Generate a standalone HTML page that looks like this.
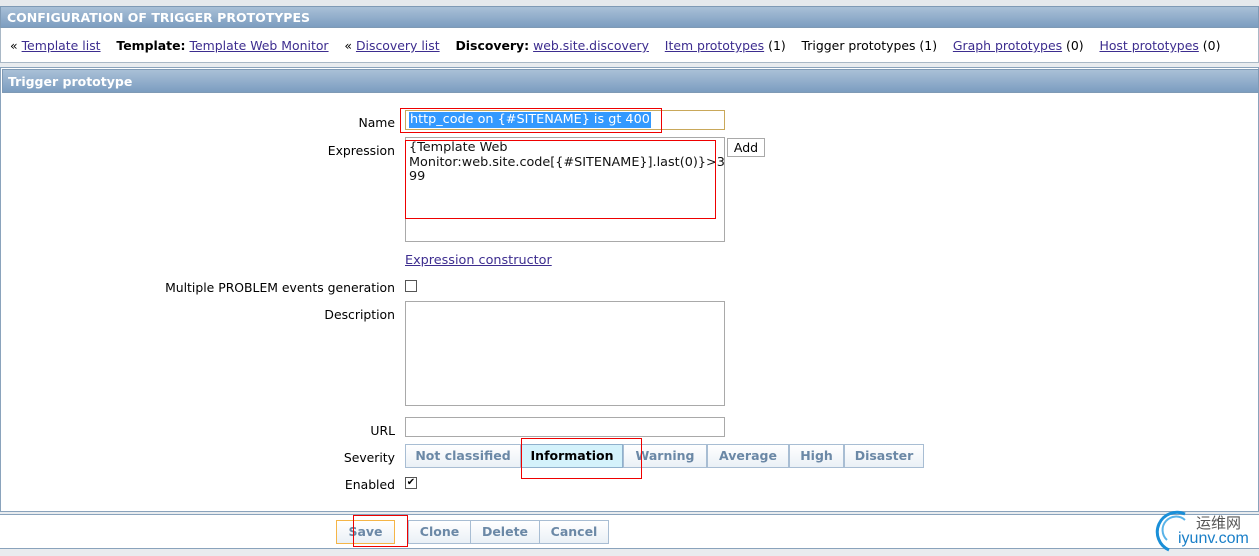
<!DOCTYPE html>
<html><head><style>
*{margin:0;padding:0;box-sizing:border-box}
body{width:1259px;height:556px;background:#e9ecef;font-family:"DejaVu Sans","Liberation Sans",sans-serif;font-size:12.4px;color:#000;position:relative;overflow:hidden}
.a{position:absolute}
a{color:#3d2d8f;text-decoration:underline}
.bar{background:linear-gradient(#a9c0d7,#7c9dc0);color:#fff;font-weight:bold;font-size:12.5px;border:1px solid #7f9ab5}
.lbl{position:absolute;right:864px;text-align:right;white-space:nowrap}
.box{position:absolute;background:#fff;border:1px solid #a9a9a9}
.btn{position:absolute;top:0;height:24px;border:1px solid #a8bdd3;background:linear-gradient(#fff,#eaf0f6);color:#6b88a6;font-weight:bold;text-align:center;line-height:22px;font-size:12.5px}
.red{position:absolute;border:1px solid #e00}
</style></head><body>
<div class="a" style="left:0;top:0;width:1259px;height:6px;background:#e6e9ec"></div>
<div class="a bar" style="left:0;top:6px;width:1259px;height:22px;padding:3px 0 0 6px">CONFIGURATION OF TRIGGER PROTOTYPES</div>
<div class="a" style="left:0;top:28px;width:1259px;height:35px;background:#fff;border:1px solid #a9b8c6;border-top:none"></div>
<div class="a" style="left:10px;top:38px;white-space:nowrap;font-size:12.45px">« <a>Template list</a>&nbsp;&nbsp;&nbsp; <b>Template:</b> <a>Template Web Monitor</a>&nbsp;&nbsp;&nbsp; « <a>Discovery list</a>&nbsp;&nbsp;&nbsp; <b>Discovery:</b> <a>web.site.discovery</a>&nbsp;&nbsp;&nbsp; <a>Item prototypes</a> (1)&nbsp;&nbsp;&nbsp; Trigger prototypes (1)&nbsp;&nbsp;&nbsp; <a>Graph prototypes</a> (0)&nbsp;&nbsp;&nbsp; <a>Host prototypes</a> (0)</div>
<div class="a" style="left:0;top:67px;width:1259px;height:445px;background:#fff;border:1px solid #8aa3bc"></div>
<div class="a bar" style="left:2px;top:69px;width:1257px;height:24px;padding:4px 0 0 5px">Trigger prototype</div>
<div class="lbl" style="top:115px">Name</div>
<div class="box" style="left:405px;top:110px;width:320px;height:20px;border-color:#c9a85a"></div>
<div class="a" style="left:409px;top:112px;height:16px;background:#3399ff;color:#fff;padding:0 1px;line-height:16px;font-size:12.8px">http_code on {#SITENAME} is gt 400</div>
<div class="red" style="left:400px;top:108px;width:262px;height:25px"></div>
<div class="lbl" style="top:143px">Expression</div>
<div class="box" style="left:405px;top:137px;width:320px;height:105px"></div>
<div class="a" style="left:409px;top:141px;line-height:14.5px;font-size:12.8px;color:#111">{Template Web<br>Monitor:web.site.code[{#SITENAME}].last(0)}&gt;3<br>99</div>
<div class="red" style="left:405px;top:140px;width:311px;height:79px"></div>
<div class="box" style="left:727px;top:138px;width:38px;height:19px;text-align:center;line-height:17px;font-size:12.5px">Add</div>
<div class="a" style="left:405px;top:253px;font-size:12.8px"><a>Expression constructor</a></div>
<div class="lbl" style="top:280px">Multiple PROBLEM events generation</div>
<div class="box" style="left:405px;top:280px;width:12px;height:12px;border-color:#555"></div>
<div class="lbl" style="top:307px">Description</div>
<div class="box" style="left:405px;top:301px;width:320px;height:105px"></div>
<div class="lbl" style="top:423px">URL</div>
<div class="box" style="left:405px;top:417px;width:320px;height:20px"></div>
<div class="lbl" style="top:450px">Severity</div>
<div class="a" style="left:405px;top:444px;width:520px;height:24px">
<div class="btn" style="left:0;width:116px">Not classified</div>
<div class="btn" style="left:116px;width:102px;background:#d4f2fb;color:#000;border-color:#8fb0cc">Information</div>
<div class="btn" style="left:218px;width:84px">Warning</div>
<div class="btn" style="left:302px;width:82px">Average</div>
<div class="btn" style="left:384px;width:55px">High</div>
<div class="btn" style="left:439px;width:80px">Disaster</div>
</div>
<div class="red" style="left:521px;top:438px;width:121px;height:41px"></div>
<div class="lbl" style="top:477px">Enabled</div>
<div class="box" style="left:405px;top:477px;width:12px;height:12px;border-color:#555;font-size:10px;line-height:10px;text-align:center">✔</div>
<div class="a" style="left:0;top:514px;width:1259px;height:35px;background:#fff;border-top:1px solid #8aa3bc;border-bottom:1px solid #8aa3bc"></div>
<div class="a" style="left:336px;top:520px;width:274px;height:24px">
<div class="btn" style="left:0;width:59px;border-color:#f5b547">Save</div>
<div class="btn" style="left:72px;width:63px">Clone</div>
<div class="btn" style="left:134px;width:70px">Delete</div>
<div class="btn" style="left:203px;width:70px">Cancel</div>
</div>
<div class="red" style="left:353px;top:515px;width:55px;height:32px"></div>
<svg class="a" style="left:1155px;top:508px" width="40" height="45"><path d="M30 6 A18 18 0 1 0 14 42" fill="none" stroke="#1a8fd8" stroke-width="3"/><path d="M30 12 A12 12 0 0 0 12 32" fill="none" stroke="#59b3e8" stroke-width="2"/></svg>
<div class="a" style="left:1196px;top:512px;font-family:'Noto Sans CJK SC',sans-serif;font-size:15px;color:#555">运维网</div>
<div class="a" style="left:1178px;top:530px;font-family:'Liberation Sans',sans-serif;font-size:16px;color:#1a7fc8">iyunv.com</div>
</body></html>
